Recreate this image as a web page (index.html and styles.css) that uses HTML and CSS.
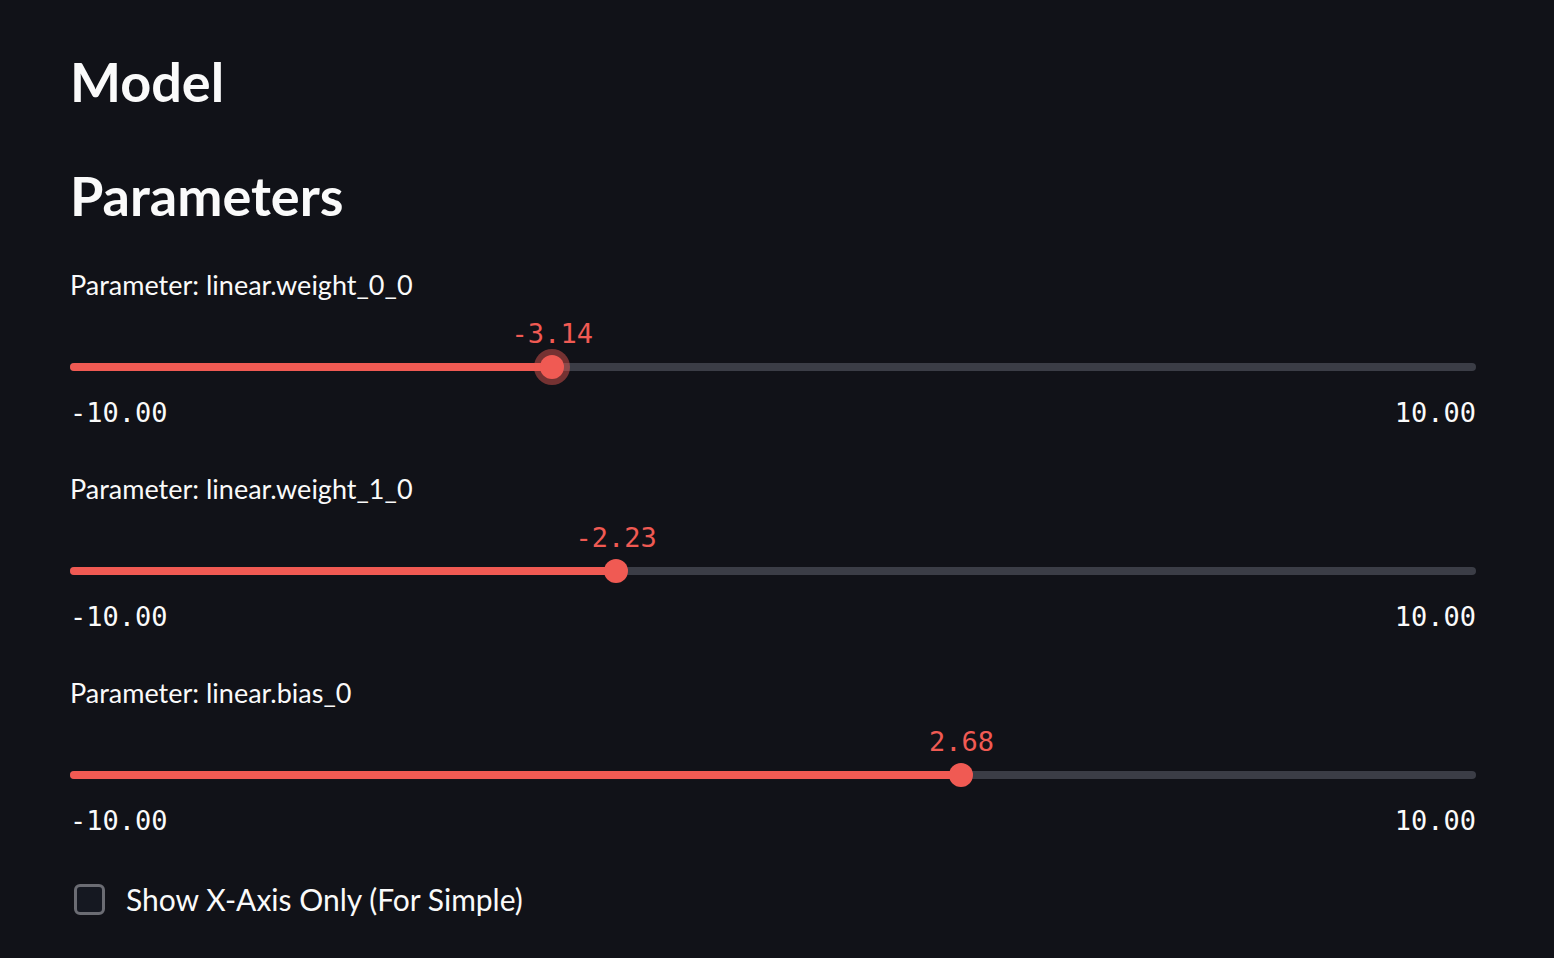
FILE: index.html
```html
<!DOCTYPE html>
<html lang="en">
<head>
  <meta charset="UTF-8">
  <title>Model</title>
  <link rel="stylesheet" href="styles.css">
</head>
<body>
  <div class="main">
    <h2 class="title">Model</h2>
    <h3 class="subtitle">Parameters</h3>

    <div class="slider-block">
      <div class="slider-label">Parameter: linear.weight_0_0</div>
      <div class="slider">
        <div class="value-row">
          <span class="value" style="left: 34.3%">-3.14</span>
        </div>
        <div class="track-area">
          <div class="track">
            <div class="fill" style="width: 34.3%"></div>
            <div class="thumb focused" style="left: 34.3%"></div>
          </div>
        </div>
        <div class="ticks">
          <span>-10.00</span>
          <span>10.00</span>
        </div>
      </div>
    </div>

    <div class="slider-block">
      <div class="slider-label">Parameter: linear.weight_1_0</div>
      <div class="slider">
        <div class="value-row">
          <span class="value" style="left: 38.85%">-2.23</span>
        </div>
        <div class="track-area">
          <div class="track">
            <div class="fill" style="width: 38.85%"></div>
            <div class="thumb" style="left: 38.85%"></div>
          </div>
        </div>
        <div class="ticks">
          <span>-10.00</span>
          <span>10.00</span>
        </div>
      </div>
    </div>

    <div class="slider-block">
      <div class="slider-label">Parameter: linear.bias_0</div>
      <div class="slider">
        <div class="value-row">
          <span class="value" style="left: 63.4%">2.68</span>
        </div>
        <div class="track-area">
          <div class="track">
            <div class="fill" style="width: 63.4%"></div>
            <div class="thumb" style="left: 63.4%"></div>
          </div>
        </div>
        <div class="ticks">
          <span>-10.00</span>
          <span>10.00</span>
        </div>
      </div>
    </div>

    <label class="checkbox">
      <span class="box"></span>
      <span class="checkbox-text">Show X-Axis Only (For Simple)</span>
    </label>
  </div>
</body>
</html>
```

FILE: styles.css
```css
body {
  margin: 0;
  background: #111218;
  color: #fafafa;
  font-family: Lato, "Noto Sans", sans-serif;
}
.main {
  padding: 46px 78px 0 70px;
}
.title, .subtitle {
  margin: 0;
  font-size: 54px;
  font-weight: 700;
  line-height: 72px;
}
.subtitle {
  margin-top: 42px;
}
.slider-block {
  margin-top: 33px;
}
.slider-block + .slider-block {
  margin-top: 41px;
}
.slider-label {
  font-size: 27px;
  line-height: 40px;
}
.value-row {
  position: relative;
  height: 30px;
  margin-top: 14px;
}
.value {
  position: absolute;
  top: 0;
  transform: translateX(-50%);
  font-family: "DejaVu Sans Mono", "Liberation Mono", monospace;
  font-size: 27px;
  line-height: 30px;
  color: #f05a53;
}
.track-area {
  height: 36px;
  display: flex;
  align-items: center;
}
.track {
  position: relative;
  width: 100%;
  height: 8px;
  border-radius: 4px;
  background: #3b3d46;
}
.fill {
  height: 100%;
  border-radius: 4px;
  background: #f05a53;
}
.thumb {
  position: absolute;
  top: 50%;
  width: 24px;
  height: 24px;
  border-radius: 50%;
  background: #f05a53;
  transform: translate(-50%, -50%);
}
.thumb.focused {
  box-shadow: 0 0 0 6px rgba(240, 90, 83, 0.45);
}
.ticks {
  margin-top: 13px;
  display: flex;
  justify-content: space-between;
  font-family: "DejaVu Sans Mono", "Liberation Mono", monospace;
  font-size: 27px;
  line-height: 30px;
}
.checkbox {
  margin-top: 43px;
  display: flex;
  align-items: center;
  gap: 21px;
  height: 40px;
  padding-left: 4px;
}
.box {
  width: 25px;
  height: 25px;
  border: 3px solid #6b6c73;
  border-radius: 6px;
  background: #151821;
}
.checkbox-text {
  font-size: 30px;
  line-height: 40px;
}
```
